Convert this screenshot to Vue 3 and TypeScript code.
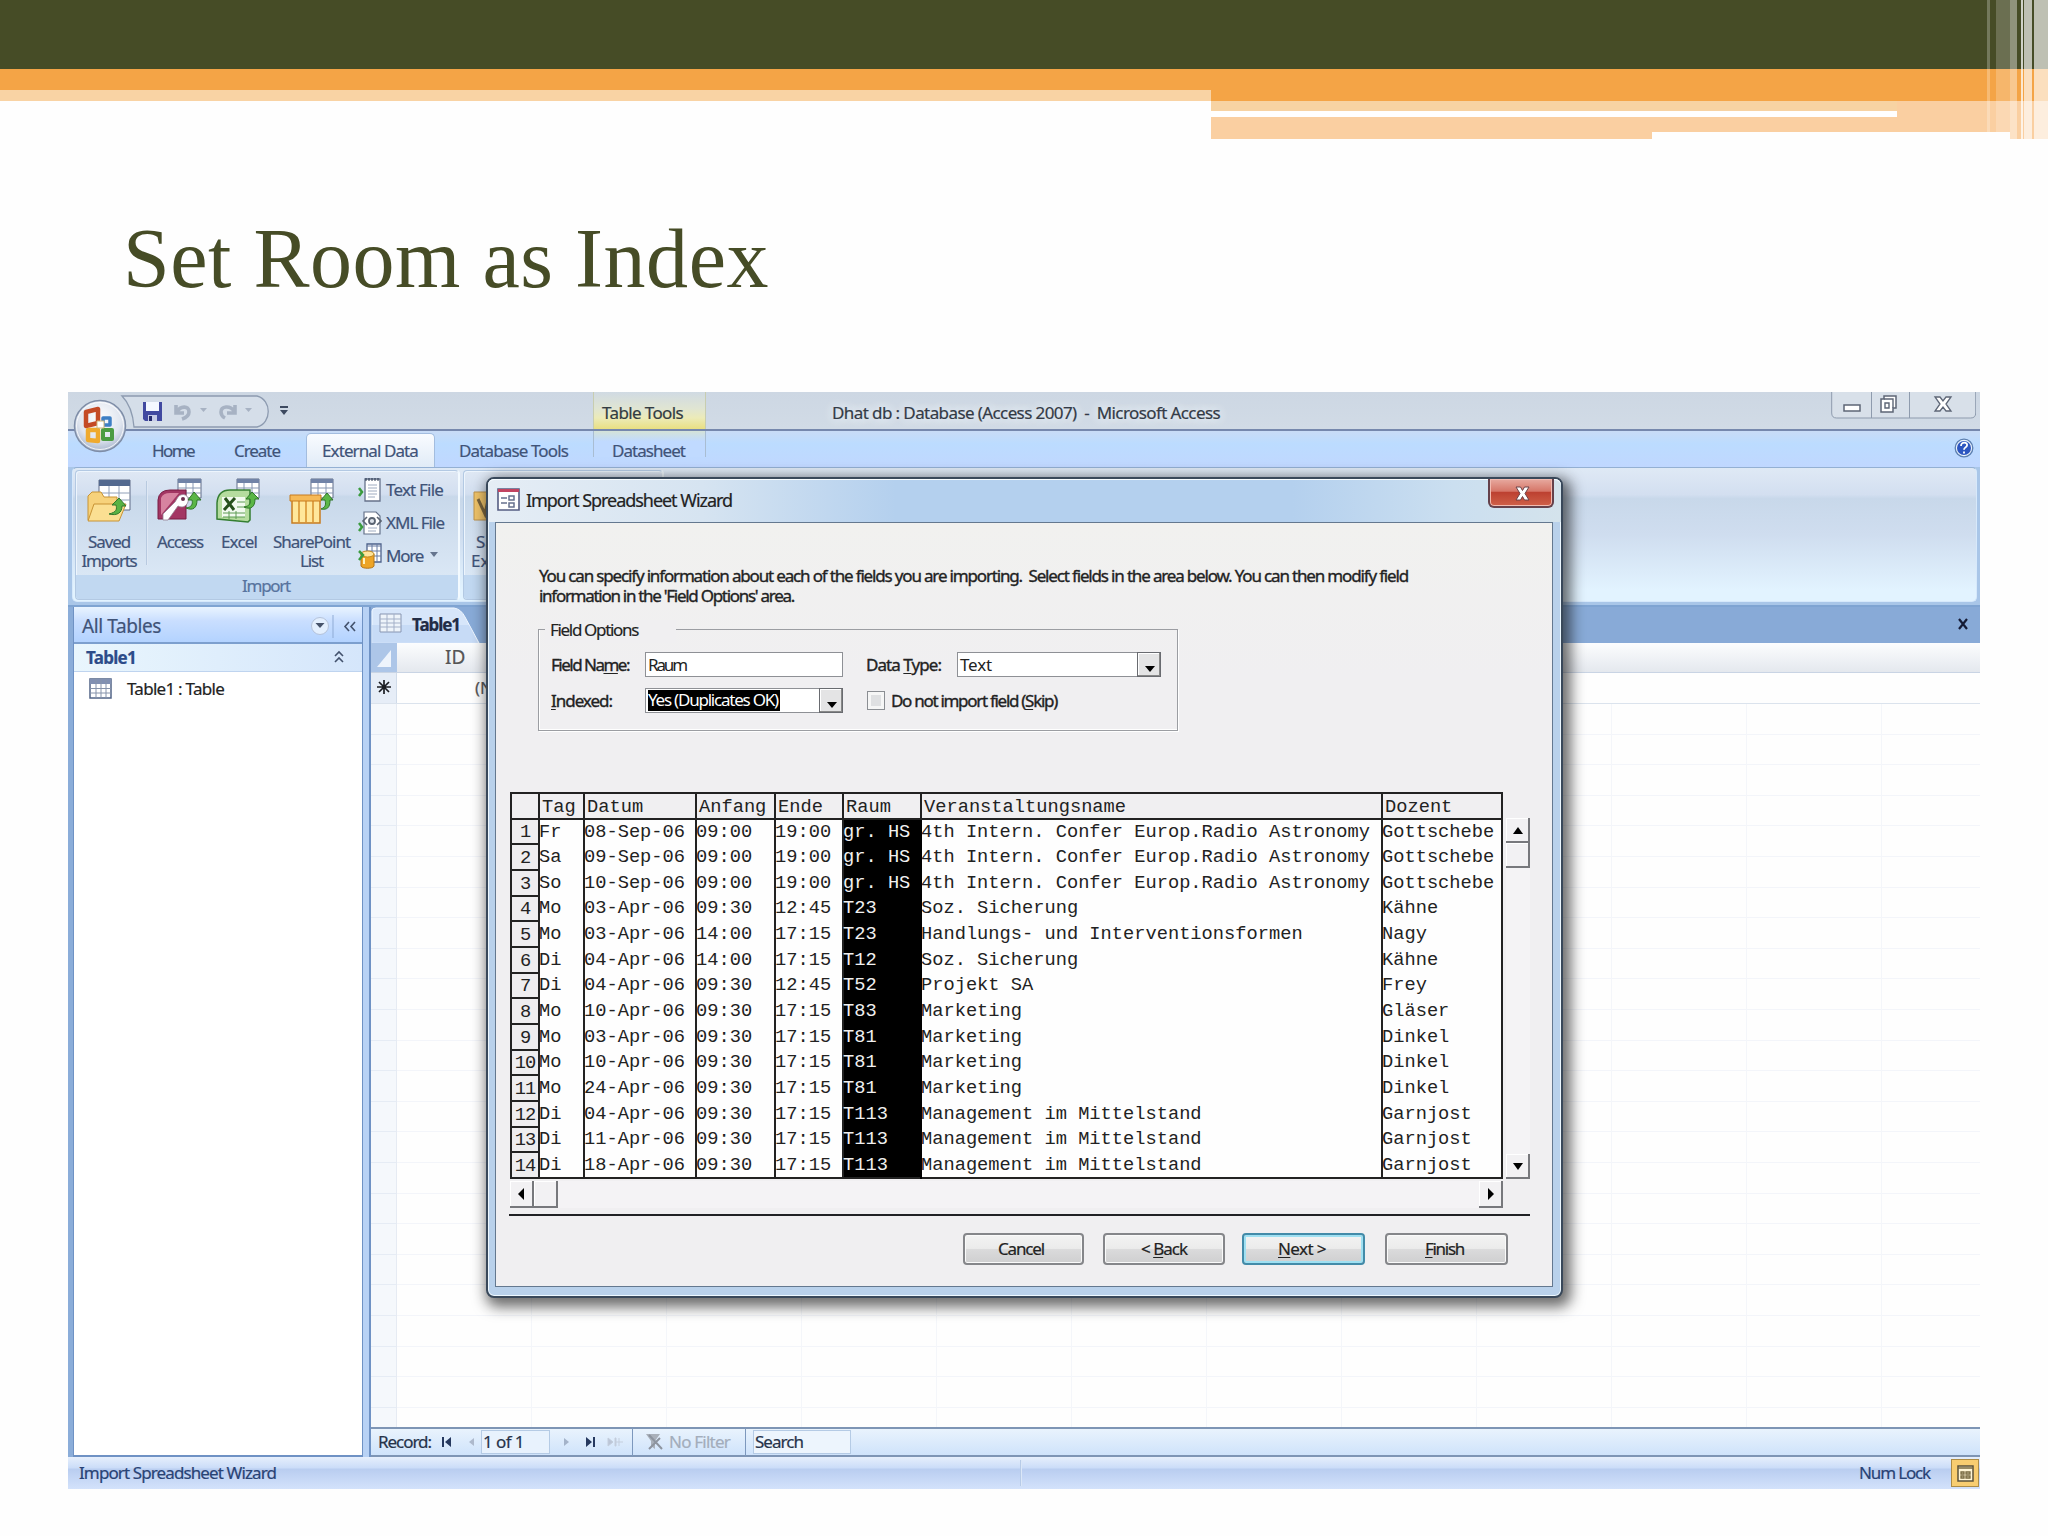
<script setup lang="ts">
import type { Directive } from 'vue'

// Gives a label a set width and spreads its letters over it.
const vFit: Directive<HTMLElement, number> = {
  mounted(el, { value }) {
    const natural = el.getBoundingClientRect().width
    const count = (el.textContent ?? '').length
    el.style.letterSpacing = `${(value - natural) / count}px`
    el.style.width = `${value}px`
  },
}

interface Lesson {
  tag: string
  datum: string
  anfang: string
  ende: string
  raum: string
  name: string
  dozent: string
}

const row = (tag: string, datum: string, anfang: string, ende: string, raum: string, name: string, dozent: string): Lesson =>
  ({ tag, datum, anfang, ende, raum, name, dozent })

const lessons: Lesson[] = [
  row('Fr', '08-Sep-06', '09:00', '19:00', 'gr. HS', '4th Intern. Confer Europ.Radio Astronomy', 'Gottschebe'),
  row('Sa', '09-Sep-06', '09:00', '19:00', 'gr. HS', '4th Intern. Confer Europ.Radio Astronomy', 'Gottschebe'),
  row('So', '10-Sep-06', '09:00', '19:00', 'gr. HS', '4th Intern. Confer Europ.Radio Astronomy', 'Gottschebe'),
  row('Mo', '03-Apr-06', '09:30', '12:45', 'T23', 'Soz. Sicherung', 'Kähne'),
  row('Mo', '03-Apr-06', '14:00', '17:15', 'T23', 'Handlungs- und Interventionsformen', 'Nagy'),
  row('Di', '04-Apr-06', '14:00', '17:15', 'T12', 'Soz. Sicherung', 'Kähne'),
  row('Di', '04-Apr-06', '09:30', '12:45', 'T52', 'Projekt SA', 'Frey'),
  row('Mo', '10-Apr-06', '09:30', '17:15', 'T83', 'Marketing', 'Gläser'),
  row('Mo', '03-Apr-06', '09:30', '17:15', 'T81', 'Marketing', 'Dinkel'),
  row('Mo', '10-Apr-06', '09:30', '17:15', 'T81', 'Marketing', 'Dinkel'),
  row('Mo', '24-Apr-06', '09:30', '17:15', 'T81', 'Marketing', 'Dinkel'),
  row('Di', '04-Apr-06', '09:30', '17:15', 'T113', 'Management im Mittelstand', 'Garnjost'),
  row('Di', '11-Apr-06', '09:30', '17:15', 'T113', 'Management im Mittelstand', 'Garnjost'),
  row('Di', '18-Apr-06', '09:30', '17:15', 'T113', 'Management im Mittelstand', 'Garnjost'),
]

const columns: { key: keyof Lesson; label: string }[] = [
  { key: 'tag', label: 'Tag' },
  { key: 'datum', label: 'Datum' },
  { key: 'anfang', label: 'Anfang' },
  { key: 'ende', label: 'Ende' },
  { key: 'raum', label: 'Raum' },
  { key: 'name', label: 'Veranstaltungsname' },
  { key: 'dozent', label: 'Dozent' },
]
</script>

<template>
  <div class="slide">
    <svg class="banner" width="2048" height="140" viewBox="0 0 2048 140" shape-rendering="crispEdges">
      <rect width="2048" height="69" fill="#464c26" />
      <rect y="69" width="1211" height="21" fill="#f4a446" />
      <rect y="90" width="1211" height="11" fill="#f9d3a4" />
      <rect x="1211" y="69" width="837" height="32" fill="#f4a446" />
      <rect x="1211" y="101" width="837" height="38" fill="#facfa1" />
      <rect x="1211" y="101" width="686" height="10" fill="#f7d3a3" />
      <rect x="1211" y="111" width="686" height="6" fill="#fff" />
      <rect x="1652" y="132" width="358" height="7" fill="#fefefe" />
      <g fill="#fff">
        <rect x="1987" width="3" height="132" opacity=".25" />
        <rect x="1996" width="14" height="132" opacity=".2" />
        <rect x="2010" width="7" height="139" opacity=".4" />
        <rect x="2021" width="2" height="139" opacity=".75" />
        <rect x="2024" width="8" height="139" opacity=".65" />
        <rect x="2034" width="14" height="139" opacity=".65" />
      </g>
    </svg>
    <h1><span v-fit="646">Set Room as Index</span></h1>

    <div class="app">
      <header class="titlebar">
        <svg class="quick" width="240" height="38" viewBox="68 392 240 38">
          <path d="M122 396H257c15 4 15 27 0 31H134c-1-13-5-24-12-31z" fill="#d5dee9" stroke="#8d9bb0" stroke-width="1.3" />
          <path d="M143 402h19v19h-17l-2-2z" fill="#4149a0" /><path d="M146 402h13v9h-13z" fill="#f4f8ff" /><path d="M148 415h9v6h-9z" fill="#c6cbe6" /><path d="M149 416h3v5h-3z" fill="#252b6e" />
          <path d="M176 405v8h8M177 412c3-6 12-7 12 0 0 4-4 6-7 7" fill="none" stroke="#a7b2c3" stroke-width="3.6" />
          <path d="M200 408h7l-3.500 4zM245 408h7l-3.500 4z" fill="#a7b2c3" />
          <path d="M235 405v8h-8M234 411c-4-6-13-5-13 1 0 3 2 5 4 6" fill="none" stroke="#a7b2c3" stroke-width="3.600" />
          <path d="M280 406h8v2h-8zM280 410h8l-4 5z" fill="#3d4a60" />
        </svg>
        <div class="context"><span v-fit="81">Table Tools</span></div>
        <span v-fit="388" class="apptitle">Dhat db : Database (Access 2007)&nbsp; -&nbsp; Microsoft Access</span>
        <svg class="winbtns" width="145" height="27" viewBox="0 0 145 27">
          <path d="M.7 0v21q0 5 5 5h134q5 0 5-5V0M40.500 0v26M78.500 0v26" fill="#d8e0e9" stroke="#8e9bad" />
          <rect x="13" y="13" width="16" height="6" fill="#fff" stroke="#5d6676" stroke-width="1.500" />
          <path d="M53 4h12v12h-3v4H50V7h3z" fill="#fff" stroke="#5d6676" stroke-width="1.500" /><path d="M53 7h9v9M54 11h4v5h-4z" fill="none" stroke="#5d6676" stroke-width="1.400" />
          <path d="M104 5h5l3 4 3-4h5l-5 7 5 7h-5l-3-4-3 4h-5l5-7z" fill="#fff" stroke="#5d6676" stroke-width="1.300" />
        </svg>
      </header>

      <nav class="tabs">
        <span v-fit="42" class="t-home">Home</span>
        <span v-fit="46" class="t-create">Create</span>
        <div class="tab-on"><span v-fit="96">External Data</span></div>
        <span v-fit="109" class="t-db">Database Tools</span>
        <div class="t-sheet"><span v-fit="73">Datasheet</span></div>
        <svg class="help" width="20" height="22" viewBox="0 0 20 22"><circle cx="10" cy="11" r="8.800" fill="#e9f2fb" stroke="#5c7fb0" stroke-width="1.300" /><circle cx="10" cy="11" r="7" fill="#2d56c0" /><path d="M7 9c0-5 7-4 6-.5-.5 2-3 2-3 4.300M10 14.500v2" fill="none" stroke="#fff" stroke-width="1.800" /></svg>
      </nav>

      <section class="ribbon">
        <div class="panel">
          <div class="group">
            <div class="tools">
              <div class="tool saved">
                <svg width="46" height="48" viewBox="86 476 46 48">
                  <path d="M99 480h31v30H99z" fill="#fff" stroke="#606d87" /><path d="M99 480h31v6H99z" fill="#53698f" /><path d="M99 493h31M99 500h31M109 486v22M119 486v22" stroke="#91a0b8" />
                  <path d="M88 496l4-4h9l3 5h13v6l-25 17h-4z" fill="#f7d27b" stroke="#c89334" /><path d="M94 504h32l-7 17H88z" fill="#fbdf92" stroke="#c89334" />
                  <path d="M109 514c8-2 8-5 7-9h-4l7-7 7 8h-4c0 7-5 10-13 8z" fill="#59b243" stroke="#31762a" />
                </svg>
                <span v-fit="42">Saved</span><span v-fit="55">Imports</span>
              </div>
              <i class="rule"></i>
              <div class="tool access">
                <svg width="46" height="48" viewBox="158 476 46 48">
                  <path d="M179 479h23v19h-23z" fill="#fff" stroke="#606d87" /><path d="M179 479h23v4h-23z" fill="#7183a7" /><path d="M179 488h23M179 493h23M187 483v14M194 483v14" stroke="#8797b2" />
                  <path d="M159 500q1-10 12-10h16v29h-28z" fill="#a33663" stroke="#791c43" /><path d="M162 498q2-5 9-5h9l-18 22z" fill="#d783a0" />
                  <path d="M179 497c4-5 12-2 10 5-2 5-6 6-10 4l-10 14h-5v-6l12-12z" fill="#fff" stroke="#968092" stroke-width=".8" /><circle cx="184" cy="499" r="2" fill="#6c3250" />
                  <path d="M187 508c6-1 7-4 6-8h-4l6-8 7 8h-4c0 8-4 11-11 8z" fill="#5bb646" stroke="#31762a" />
                </svg>
                <span v-fit="46">Access</span>
              </div>
              <div class="tool excel">
                <svg width="46" height="48" viewBox="218 476 46 48">
                  <path d="M239 479h22v19h-22z" fill="#fff" stroke="#606d87" /><path d="M239 479h22v4h-22z" fill="#7183a7" /><path d="M239 488h22M239 493h22M246 483v14M254 483v14" stroke="#8797b2" />
                  <path d="M219 503q1-13 13-13h20v30l-2 2-31-3z" fill="#b5dc9e" stroke="#347e31" stroke-width="1.500" /><path d="M224 497h23v20h-23z" fill="#f2faef" />
                  <path d="M227 498l9 12M237 498l-11 12" stroke="#27511d" stroke-width="3" /><path d="M225 513h22M225 517h22M239 502h8M239 507h8M231 511v8M238 511v8" stroke="#5f9c55" />
                  <path d="M246 507c6-1 7-4 6-8h-4l6-7 7 7h-4c0 8-4 11-11 8z" fill="#5bb646" stroke="#31762a" />
                </svg>
                <span v-fit="36">Excel</span>
              </div>
              <div class="tool share">
                <svg width="46" height="48" viewBox="288 476 46 48">
                  <path d="M310 479h22v19h-22z" fill="#fff" stroke="#606d87" /><path d="M310 479h22v4h-22z" fill="#7183a7" /><path d="M310 488h22M310 493h22M317 483v14M325 483v14" stroke="#8797b2" />
                  <path d="M291 500h28v23h-28z" fill="#ffe79b" stroke="#c77c20" stroke-width="1.500" /><path d="M298 501v22M305 501v22M312 501v22" stroke="#d99534" stroke-width="1.600" /><path d="M289 495h31v6h-31z" fill="#f6b956" stroke="#c77c20" />
                  <path d="M320 509c5-2 5-5 4-9h-4l6-7 6 7h-3c0 8-3 10-9 9z" fill="#5bb646" stroke="#31762a" />
                </svg>
                <span v-fit="77">SharePoint</span><span v-fit="23">List</span>
              </div>
              <div class="small">
                <div><svg width="24" height="28" viewBox="0 0 24 28"><path d="M7 3h15v22H7z" fill="#fff" stroke="#65728a" stroke-width="1.300" /><path d="M8 2v3M11 2v3M14 2v3M17 2v3M20 2v3" stroke="#26364f" /><path d="M10 9h9M10 12h9M10 15h9M10 18h9M10 21h7" stroke="#9eabc0" /><path d="M1 12l3 4-3 4" stroke="#3b9b3e" stroke-width="2.500" fill="none" /></svg><span v-fit="57">Text File</span></div>
                <div><svg width="24" height="28" viewBox="0 0 24 28"><path d="M6 3h12l4 4v18H6z" fill="#fff" stroke="#65728a" stroke-width="1.200" /><path d="M9 8l-4 4 4 4M19 8l4 4-4 4" stroke="#5a6472" stroke-width="1.600" fill="none" /><circle cx="14" cy="12" r="3" fill="#dce2ea" stroke="#5a6472" stroke-width="1.800" /><path d="M10 19h9M10 22h8" stroke="#9eabc0" /><path d="M1 14l3 4-3 4" stroke="#3b9b3e" stroke-width="2.500" fill="none" /></svg><span v-fit="58">XML File</span></div>
                <div><svg width="24" height="28" viewBox="0 0 24 28"><path d="M9 2h14v18H9z" fill="#fff" stroke="#4e628b" stroke-width="1.300" /><path d="M9 4h14M9 9h14M9 14h14M14 2v18M19 2v18" stroke="#667aa2" /><path d="M3 12v12c1 3 12 3 13 0V12z" fill="#eda426" stroke="#b37417" /><ellipse cx="9.500" cy="12" rx="6.500" ry="3" fill="#ffe49a" stroke="#c18a20" /><path d="M6 16v6" stroke="#fff2bd" stroke-width="2" /><path d="M1 9l4 4-4 5" stroke="#3b9b3e" stroke-width="2.500" fill="none" /></svg><span v-fit="37">More</span><svg class="drop" width="8" height="5"><path d="M0 0h8L4 5z" fill="#65758e" /></svg></div>
              </div>
            </div>
            <footer><span v-fit="48">Import</span></footer>
          </div>
          <div class="group next">
            <div class="tool"><svg width="46" height="48"><path d="M3 16h32v28H3z" fill="#f1c469" stroke="#bc924d" /><path d="M7 23l7 15 3-14" stroke="#7b643b" stroke-width="3" fill="none" /></svg><span class="s1">Saved</span><span>Exports</span></div>
            <footer></footer>
          </div>
        </div>
      </section>

      <main class="body">
        <aside>
          <div class="allhead"><span v-fit="79">All Tables</span>
            <svg width="50" height="28" viewBox="0 0 50 28"><circle cx="9" cy="13" r="8.500" fill="#e3effe" stroke="#b5c3da" /><path d="M4.500 10h9l-4.500 5z" fill="#47546b" /><path d="M22 2v23" stroke="#8fabd5" /><path d="M38 9l-4 4.500 4 4.500M44 9l-4 4.500 4 4.500" fill="none" stroke="#43526d" stroke-width="1.600" /></svg>
          </div>
          <div class="grouphead"><b v-fit="50">Table1</b><svg width="12" height="16"><path d="M2 8l4-4 4 4M2 14l4-4 4 4" fill="none" stroke="#43526d" stroke-width="1.600" /></svg></div>
          <div class="entry"><svg width="23" height="21"><path d="M1 1h21v19H1z" fill="#fff" stroke="#526487" stroke-width="1.500" /><path d="M1 1h21v5H1z" fill="#8190b2" /><path d="M1 10.500h21M1 15h21M7 1v19M12 1v19M17 1v19" stroke="#8693aa" /></svg><span v-fit="97">Table1 : Table</span></div>
        </aside>
        <section class="doc">
          <div class="doctabs">
            <svg class="tabshape" width="112" height="36" viewBox="0 0 112 36"><path d="M1 36V4q0-3 4-3h78q7 1 11 9l14 26z" fill="#d7e6fa" stroke="#f0f7ff" /><path d="M1 18h97l9 18H1z" fill="#bdd4f3" opacity=".6" /><path d="M9 7h21v18H9z" fill="#eef4fa" stroke="#8795b1" /><path d="M9 12h21M9 16h21M9 20h21M16 7v18M23 7v18" stroke="#a3b0c8" /></svg>
            <b v-fit="48">Table1</b>
            <svg class="docx" width="12" height="12"><path d="M2 1l8 10M10 1L2 11" stroke="#151b35" stroke-width="2.200" /></svg>
          </div>
          <div class="colhead"><i><svg width="24" height="29"><path d="M20 7v17H6z" fill="#eef4fc" /></svg></i><span>ID</span></div>
          <div class="newrow"><i><svg width="14" height="14"><path d="M7 0v14M0 7h14M2 2l10 10M12 2L2 12" stroke="#1b1d22" stroke-width="1.700" /></svg></i><span>(New)</span></div>
          <div class="cells"><i></i></div>
          <div class="record">
            <span v-fit="53">Record:</span>
            <svg class="first" width="40" height="16"><path d="M1 3h2v10H1zM10 3v10L4 8z" fill="#26395f" /><path d="M33 4v8l-5-4z" fill="#adb9cc" /></svg>
            <div class="pos"><span v-fit="41">1 of 1</span></div>
            <svg class="last" width="82" height="16"><path d="M14 4v8l5-4z" fill="#a4b3c9" /><path d="M36 3v10l6-5zM43 3h2v10h-2z" fill="#26395f" /><path d="M58 4v8l5-4zM65 4h1v8h-1zM69 4v8M66 8h7" fill="#bbc5d6" stroke="#c4cedd" /></svg>
            <div class="filter"><svg width="20" height="20"><path d="M2 2h14l-5 7v8l-4-3V9z" fill="#a9b0ba" /><path d="M5 3l13 14M16 6L5 17" stroke="#8d949f" stroke-width="2" /></svg><span v-fit="61">No Filter</span></div>
            <div class="search"><span v-fit="48">Search</span></div>
          </div>
        </section>
      </main>
      <footer class="status">
        <span v-fit="197">Import Spreadsheet Wizard</span><i></i><span v-fit="71">Num Lock</span>
        <div class="view"><svg width="17" height="17"><path d="M1 1h15v15H1z" fill="#fff5d5" stroke="#5b5138" stroke-width="1.500" /><path d="M1 3h15M4 7h3v2H4zM9 7h4v2H9zM4 11h3v2H4zM9 11h4v2H9z" fill="none" stroke="#776840" stroke-width="1.300" /></svg></div>
      </footer>

      <svg class="orb" width="56" height="58" viewBox="72 396 56 58">
        <defs><radialGradient id="orbFill" cx=".5" cy=".35" r=".7"><stop stop-color="#fff" /><stop offset=".6" stop-color="#dfe5ef" /><stop offset="1" stop-color="#9babc5" /></radialGradient></defs>
        <circle cx="100" cy="426" r="25.500" fill="url(#orbFill)" stroke="#7e8da7" stroke-width="1.500" /><circle cx="100" cy="426" r="23.500" fill="none" stroke="#fff" opacity=".8" />
        <g fill="none" stroke-linejoin="round"><path d="M86 412l12-3v14l-12 3z" stroke="#c44a25" stroke-width="4.500" /><path d="M103 418h7v7h-7z" stroke="#3e7fc4" stroke-width="3.500" /><path d="M88 430h10v11l-10-1z" stroke="#efaa2e" stroke-width="4.500" /><path d="M103 430h9v9h-9z" stroke="#4b9c41" stroke-width="4" /></g>
        <path d="M97 421h7v7h-7z" fill="#fff" stroke="#ceb67a" />
      </svg>

      <section class="dialog">
        <header>
          <svg width="23" height="23"><path d="M1 1h21v21H1z" fill="#fff" stroke="#555d83" stroke-width="1.600" /><path d="M1 1h21v3H1z" fill="#c24461" /><path d="M4 10h6M4 15h6M12 8h5v4h-5zM12 15h5v4h-5z" stroke="#66708d" stroke-width="1.500" fill="none" /></svg>
          <span v-fit="206">Import Spreadsheet Wizard</span>
          <div class="close"><svg width="15" height="15"><path d="M1 1h4.500l2 3.500L9.500 1H14l-4 6.500 4 6.500H9.500l-2-3.500-2 3.500H1l4-6.500z" fill="#fff" stroke="#6b4248" /></svg></div>
        </header>
        <div class="pane">
          <p><span v-fit="869">You can specify information about each of the fields you are importing.&nbsp; Select fields in the area below. You can then modify field</span><br><span v-fit="255">information in the 'Field Options' area.</span></p>
          <div class="fieldset">
            <div class="legend"><span v-fit="88">Field Options</span></div>
            <div class="line">
              <label><span v-fit="78">Field Na<u>m</u>e:</span></label>
              <div class="input"><span v-fit="38">Raum</span></div>
              <label class="l2"><span v-fit="75">Data <u>T</u>ype:</span></label>
              <div class="input type"><span v-fit="32">Text</span><i><svg width="12" height="8"><path d="M1 1h10L6 7z" /></svg></i></div>
            </div>
            <div class="line">
              <label><span v-fit="61"><u>I</u>ndexed:</span></label>
              <div class="input"><em><span v-fit="130">Yes (Duplicates OK)</span></em><i><svg width="12" height="8"><path d="M1 1h10L6 7z" /></svg></i></div>
              <div class="check"></div><span v-fit="166">Do not import field (<u>S</u>kip)</span>
            </div>
          </div>
          <div class="preview">
            <table>
              <colgroup><col class="c0"><col class="c1"><col class="c2"><col class="c3"><col class="c4"><col class="c5"><col class="c6"><col class="c7"></colgroup>
              <thead><tr><th></th><th v-for="c in columns" :key="c.key">{{ c.label }}</th></tr></thead>
              <tbody>
                <tr v-for="(l, i) in lessons" :key="i">
                  <th>{{ i + 1 }}</th>
                  <td v-for="c in columns" :key="c.key" :class="{ picked: c.key === 'raum' }"><div>{{ l[c.key] }}</div></td>
                </tr>
              </tbody>
            </table>
            <div class="vscroll"><i><svg width="12" height="7"><path d="M1 7h10L6 0z" /></svg></i><i></i><b></b><i><svg width="12" height="7"><path d="M1 0h10L6 7z" /></svg></i></div>
          </div>
          <div class="hscroll"><i><svg width="7" height="12"><path d="M6 0v12L0 6z" /></svg></i><i></i><b></b><i><svg width="7" height="12"><path d="M1 0v12l6-6z" /></svg></i></div>
          <hr>
          <div class="actions">
            <button class="b1"><span v-fit="46">Cancel</span></button>
            <button class="b2"><span v-fit="46">&lt; <u>B</u>ack</span></button>
            <button class="b3"><span v-fit="48"><u>N</u>ext &gt;</span></button>
            <button class="b4"><span v-fit="39"><u>F</u>inish</span></button>
          </div>
        </div>
      </section>
    </div>
  </div>
</template>

<style>
body { margin: 0; background: #fefefe; }
</style>

<style scoped>
* { box-sizing: border-box; }
i, em { font-style: normal; }
svg { display: block; flex: none; }
span, b { display: inline-block; white-space: pre; flex: none; }
.slide { width: 2048px; height: 1536px; overflow: hidden; background: #fefefe; }
.banner { height: 140px; }
h1 { margin: 0; height: 252px; padding: 69px 0 0 123px; font: 400 84px/100px "Liberation Serif", serif; color: #464c26; }
.app { position: relative; width: 1912px; height: 1097px; margin-left: 68px; font: 17px/20px "Noto Sans", "Open Sans", sans-serif; color: #3f5378; background: #bfdbff; display: flex; flex-direction: column; -webkit-text-stroke: .2px; }

.titlebar { height: 39px; display: flex; background: linear-gradient(#cdd7e3, #d1dbe6); border-bottom: 2px solid #7688ad; }
.context { width: 113px; margin-left: 285px; padding: 11px 0 0 8px; color: #333c42; background: linear-gradient(#d0dae3, #e0e5d2 45%, #ecebb8 70%, #e9df82); border: solid #c8cdb0; border-width: 0 1px; }
.apptitle { margin: 11px 0 0 126px; color: #333a46; text-shadow: 0 0 8px #eef4f8, 0 0 12px #eef4f8; }
.winbtns { margin-left: 611px; }

.tabs { height: 36px; display: flex; align-items: flex-start; background: linear-gradient(#c9dcf6, #bcdcff 35%, #c0d7ff); padding-left: 84px; }
.tabs > span { margin-top: 10px; }
.t-create { margin-left: 40px; }
.tab-on { width: 129px; height: 34px; margin-left: 26px; padding: 7px 0 0 15px; border: 1px solid #a3bddf; border-bottom: 0; border-radius: 5px 5px 0 0; background: linear-gradient(#f9fcff, #e1ebf7); margin-top: 2px; }
.t-db { margin-left: 24px; }
.t-sheet { width: 113px; height: 26px; margin-left: 25px; padding: 10px 0 0 18px; background: linear-gradient(#d5e3d8, #c0daff 40%); border: solid #a9bdd2; border-width: 0 1px; }
.help { margin: 6px 6px 0 auto; }

.ribbon { height: 138px; padding: 0 3px 3px 4px; background: #a9c6e8; }
.panel { display: flex; height: 135px; padding: 2px; border-radius: 5px; border: 1px solid #d7e9fb; border-top-color: #94b0d3; background: linear-gradient(#dfe9f5 0, #d3dff0 20%, #c8d8ea 23%, #cfddef 50%, #e2f3ff 92%); }
.group { width: 384px; height: 130px; border: 1px solid #b3c9e3; border-right-color: #f3faff; box-shadow: 1px 0 0 #f3faff, inset 1px 1px 0 #edf5fd; border-radius: 4px; overflow: hidden; display: flex; flex-direction: column; justify-content: space-between; background: linear-gradient(#dfe8f4 0, #d3dff0 18%, #c8d8ea 20%, #dae7f5 82%); }
.group footer { height: 24px; background: #c1d8f1; padding: 0 0 2px 166px; color: #57739e; display: flex; align-items: center; }
.next { width: 200px; margin-left: 4px; }
.next .tool { margin: 0 0 0 7px; align-items: flex-start; }
.next .s1 { margin-left: 5px; }
.tools { display: flex; height: 104px; }
.tool { display: flex; flex-direction: column; align-items: center; padding-top: 5px; line-height: 19px; }
.tool svg { margin-bottom: 8px; }
.saved { margin-left: 5px; width: 56px; }
.rule { width: 2px; height: 84px; margin: 10px 0 0 9px; background: linear-gradient(90deg, #a5bad5, #f2f8ff); }
.access { margin-left: 9px; width: 46px; }
.excel { margin-left: 13px; width: 46px; }
.share { margin-left: 11px; width: 77px; }
.small { margin: 2px 0 0 8px; }
.small > div { display: flex; align-items: center; height: 33px; gap: 4px; }
.drop { margin: 0 0 2px 3px; }

.body { display: flex; height: 852px; background: #8badd9; padding-left: 5px; border-top: 2px solid #7fa4d2; }
aside { width: 290px; background: #fff; border: solid #6f92c4; border-width: 0 1px 2px; }
.allhead { height: 37px; display: flex; padding: 9px 0 0 8px; justify-content: space-between; background: linear-gradient(#e9f4ff, #c9deff 40%, #b3d3ff); border-bottom: 2px solid #7c9fce; font-size: 19px; }
.allhead svg { margin: -3px 1px 0 0; }
.grouphead { height: 28px; padding: 4px 17px 0 12px; display: flex; justify-content: space-between; color: #2d4c89; background: linear-gradient(90deg, #e9f6fd, #d5e6fb); border-bottom: 1px solid #bfd4ef; }
.entry { display: flex; padding: 6px 0 0 15px; gap: 15px; color: #222; }
.entry span { margin-top: 1px; }
.doc { flex: 1; margin-left: 8px; background: #fefefe; display: flex; flex-direction: column; box-shadow: -2px 0 0 #6f92c4, -8px 0 0 #b8d2f5; min-width: 0; }
.doctabs { height: 36px; background: #88aad7; display: flex; }
.doctabs b { margin: 8px 0 0 -71px; color: #222c46; }
.docx { margin: 11px 11px 0 auto; }
.colhead { height: 30px; display: flex; background: linear-gradient(#fcfdfe, #e4e8ee); border-bottom: 1px solid #c9d4e4; font-size: 19px; color: #555; }
.colhead i { width: 26px; background: #adc6e8; }
.colhead span { margin: 4px 0 0 48px; }
.newrow { height: 31px; display: flex; border-bottom: 1px solid #dbe3ed; color: #555; }
.newrow i { width: 26px; padding: 7px 0 0 6px; background: #e6edf7; border-right: 1px solid #d0dbe9; }
.newrow span { margin: 5px 0 0 78px; }
.cells { flex: 1; background: repeating-linear-gradient(90deg, transparent 0 134px, #f4f6fa 134px 135px) 26px 0, repeating-linear-gradient(transparent 0 29.600px, #f3f5fa 29.600px 30.600px), #fefefe; }
.cells i { display: block; width: 26px; height: 100%; background: repeating-linear-gradient(transparent 0 29.600px, #e6ecf5 29.600px 30.600px), #f5f8fc; border-right: 1px solid #e6ebf3; }
.record { height: 30px; display: flex; align-items: center; padding-left: 7px; border: solid #7e95b5; border-width: 2px 0; background: linear-gradient(#e9f3fd, #cfe3fb); color: #2c3f60; }
.first { margin-left: 10px; }
.pos { width: 69px; height: 24px; padding: 1px 0 0 1px; background: #e8f2fd; border: 1px solid #b5cbe5; }
.record span { color: #26334a; }
.filter { width: 114px; height: 28px; padding-left: 11px; display: flex; align-items: center; gap: 5px; border: solid #7d98bd; border-width: 0 1px; }
.record .filter span { color: #a3adbb; }
.search { width: 98px; height: 24px; margin-left: 7px; padding: 1px 0 0 1px; background: #edf5fd; border: 1px solid #b5cbe5; }
.status { height: 32px; display: flex; align-items: center; padding-left: 11px; color: #294375; background: linear-gradient(#e6effc, #cadcf8 35%, #b9cdf0 37%, #d3e2fb); }
.status i { height: 26px; width: 2px; margin: 0 837px 0 744px; background: linear-gradient(90deg, #a5bde0, #edf5ff); }
.view { margin-left: 21px; width: 28px; height: 28px; padding: 5px; background: #f8cd70; border: 1px solid #ac8c46; }

.orb { position: absolute; left: 4px; top: 4px; }

.dialog { position: absolute; left: 418px; top: 85px; width: 1077px; height: 821px; border: 2px solid #39485a; border-radius: 8px; background: #b9d1eb; box-shadow: inset 0 0 0 1px #edf8ff, 4px 5px 14px 4px rgba(20, 20, 20, .62); color: #222; overflow: visible; }
.dialog > header { height: 43px; padding: 9px 0 0 9px; display: flex; border-radius: 6px 6px 0 0; background: linear-gradient(90deg, #e5edf5, #d6e4f1 20%, #b4d0ee 38%, #b4d0ee 75%, #cbdff0 90%, #d4e3ec); box-shadow: inset 0 1px 0 #f7fcff; }
.dialog > header > span { margin: 2px 0 0 6px; font-size: 18px; }
.close { width: 66px; height: 29px; margin: -9px 7px 0 auto; border: 2px solid #65414b; border-top: 0; border-radius: 0 0 6px 6px; background: linear-gradient(#e7aaa0, #d67668 45%, #bd4131 50%, #cf6048); padding: 7px 0 0 25px; box-shadow: inset 0 0 0 1px #f2bbb1; }
.pane { width: 1058px; height: 765px; margin-left: 7px; border: 1px solid #64788f; background: linear-gradient(#f1f1ef, #f0eff1 20%); font: 17px/19.600px "Noto Sans", sans-serif; -webkit-text-stroke: .35px; }
.dialog u { text-underline-offset: 2px; }
p { margin: 43px 0 0 43px; height: 63px; }
p span { vertical-align: top; }
.fieldset { width: 640px; height: 102px; margin-left: 42px; border: 1px solid #9b9da2; box-shadow: inset 1px -1px 0 #fff, 1px 1px 0 #fff; padding-left: 12px; }
.legend { width: 131px; height: 23px; margin: -10px 0 3px -6px; padding-left: 5px; background: #f0eff1; -webkit-text-stroke: .15px; }
.line { display: flex; height: 36px; padding-top: 1px; align-items: center; }
.line label { width: 94px; }
.line .l2 { width: 91px; margin-left: 23px; }
.input { width: 198px; height: 25px; border: 1px solid #8e9095; background: #fff; padding-left: 2px; display: flex; align-items: center; justify-content: space-between; -webkit-text-stroke: 0; }
.type { width: 204px; }
.input i { width: 24px; height: 25px; border: 1px solid #696b70; box-shadow: inset -1px -1px 0 #888, inset 1px 1px 0 #fff; background: #e4e4e5; padding: 12px 0 0 6px; margin-right: -1px; }
.input em { height: 21px; width: 132px; background: #000; color: #fff; line-height: 20px; }
.check { width: 18px; height: 19px; margin: 0 6px 0 24px; border: 1px solid #8b8e93; background: #dfe0e2; box-shadow: inset 0 0 0 3px #f6f6f6; }

.preview { display: flex; margin: 61px 0 0 14px; height: 387px; -webkit-text-stroke: 0; }
table { width: 992px; height: 387px; border-collapse: collapse; table-layout: fixed; font: 18.720px/20px "Liberation Mono", monospace; color: #222; border: 2px solid #222; }
.c0 { width: 28px; } .c1 { width: 45px; } .c2 { width: 112px; } .c3 { width: 79px; } .c4 { width: 68px; } .c5 { width: 78px; } .c6 { width: 461px; } .c7 { width: 120px; }
th, td { padding: 0; font-weight: 400; text-align: left; white-space: pre; border: solid #222; border-width: 0 2px; }
tr { height: 25.660px; }
td { background: #fefefe; }
td div { margin-left: -1px; }
thead th { border-bottom: 2px solid #222; padding: 2px 0 0 2px; }
tbody th { border: 2px solid #222; background: #eeedef; text-align: center; letter-spacing: -1px; padding-top: 2px; }
td.picked { background: #000; color: #f0f0f0; border-left-color: #000; border-right-color: #000; }
.vscroll { width: 24px; margin: 26px 0 0 3px; display: flex; flex-direction: column; }
.vscroll b, .hscroll b { flex: 1; background: #f4f3f5; }
.vscroll i { height: 25px; padding: 9px 0 0 6px; }
.hscroll i { width: 24px; padding: 7px 0 0 8px; }
.vscroll i, .hscroll i { border: solid #77787c; border-width: 0 2px 2px 0; background: #f2f1f3; box-shadow: inset 1px 1px 0 #fff; }
.hscroll { display: flex; width: 993px; height: 27px; margin: 2px 0 0 14px; }
hr { width: 1021px; height: 2px; margin: 6px 0 0 13px; border: 0; background: #202124; }
.actions { display: flex; margin: 17px 0 0 467px; -webkit-text-stroke: .2px; }
button { height: 32px; padding: 0; border: 2px solid #85868a; border-radius: 4px; background: linear-gradient(#f3f3f3, #ebebeb 48%, #dadadb 52%, #cfcfd0); box-shadow: inset 0 0 0 1px #fafafa; font: inherit; color: #222; text-align: left; }
.b1 { width: 121px; padding-left: 33px; margin-right: 19px; }
.b2 { width: 122px; padding-left: 36px; margin-right: 17px; }
.b3 { width: 123px; padding-left: 34px; margin-right: 20px; border-color: #438ba9; box-shadow: inset 0 0 0 2px #9fe0f2; }
.b4 { width: 123px; padding-left: 38px; }
</style>
